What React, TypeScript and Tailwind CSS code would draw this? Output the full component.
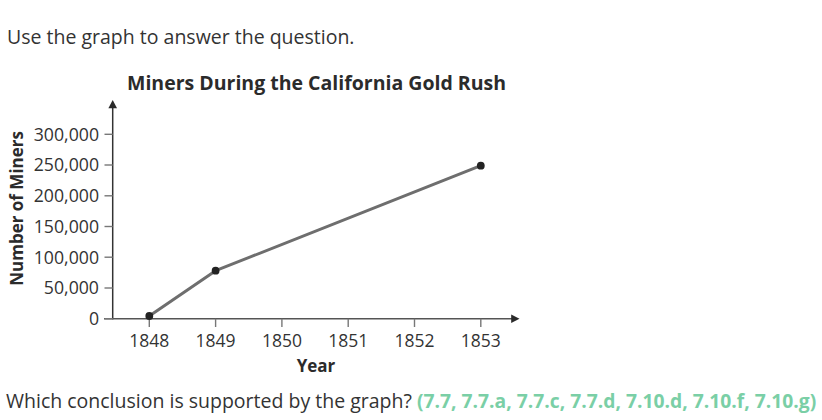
import React from "react";

const yTicks = [
  { label: "0", y: 318.7 },
  { label: "50,000", y: 288 },
  { label: "100,000", y: 257.2 },
  { label: "150,000", y: 226.5 },
  { label: "200,000", y: 195.8 },
  { label: "250,000", y: 165 },
  { label: "300,000", y: 134.3 },
];

const xTicks = [
  { label: "1848", x: 149.3 },
  { label: "1849", x: 215.6 },
  { label: "1850", x: 281.9 },
  { label: "1851", x: 348.2 },
  { label: "1852", x: 414.5 },
  { label: "1853", x: 480.8 },
];

const points = [
  { x: 149.3, y: 316 },
  { x: 215.6, y: 270.7 },
  { x: 480.8, y: 165.7 },
];

function Chart() {
  return (
    <svg
      width={540}
      height={291}
      viewBox="0 96 540 291"
      className="block"
      style={{ fontFamily: "'Open Sans', 'Noto Sans', sans-serif" }}
    >
      {/* y axis */}
      <line x1={112.7} y1={106} x2={112.7} y2={319.4} stroke="#333" strokeWidth={1.5} />
      <polygon points="112.7,100 108.4,108.2 117,108.2" fill="#2a2a2a" />
      {/* x axis */}
      <line x1={104} y1={318.7} x2={512} y2={318.7} stroke="#555" strokeWidth={1.5} />
      <polygon points="519.5,318.7 511.2,314.4 511.2,323" fill="#2a2a2a" />

      {yTicks.map((t) => (
        <g key={t.label}>
          <line x1={104.5} y1={t.y} x2={112.7} y2={t.y} stroke="#777" strokeWidth={1.4} />
          <text x={99} y={t.y + 6.4} textAnchor="end" fontSize={17.7} fill="#333">
            {t.label}
          </text>
        </g>
      ))}

      {xTicks.map((t) => (
        <g key={t.label}>
          <line x1={t.x} y1={318.7} x2={t.x} y2={327} stroke="#777" strokeWidth={1.4} />
          <text x={t.x} y={346.6} textAnchor="middle" fontSize={17.5} fill="#333">
            {t.label}
          </text>
        </g>
      ))}

      <text x={316} y={371.7} textAnchor="middle" fontSize={17} fontWeight={700} fill="#2b2b2b">
        Year
      </text>
      <text
        x={23}
        y={208.4}
        textAnchor="middle"
        fontSize={17}
        fontWeight={700}
        fill="#2b2b2b"
        transform="rotate(-90 23 208.4)"
      >
        Number of Miners
      </text>

      <polyline
        points={points.map((p) => `${p.x},${p.y}`).join(" ")}
        fill="none"
        stroke="#6e6e6e"
        strokeWidth={3}
        strokeLinejoin="round"
      />
      {points.map((p, i) => (
        <circle key={i} cx={p.x} cy={p.y} r={3.9} fill="#222" />
      ))}
    </svg>
  );
}

export default function App() {
  return (
    <div className="w-[822px] h-[420px] bg-white overflow-hidden font-['Open_Sans','Noto_Sans',sans-serif] text-[#333]">
      <p className="pt-[23px] pl-[7px] text-[19.5px] leading-[28px]">Use the graph to answer the question.</p>
      <h2 className="mt-[19px] pl-[127px] text-[19.5px] leading-[26px] font-bold text-[#2b2b2b]">
        Miners During the California Gold Rush
      </h2>
      <Chart />
      <p className="pl-[6px] text-[19.5px] leading-[28px] whitespace-nowrap">
        Which conclusion is supported by the graph?{" "}
        <span className="font-bold text-[#7acfa6] text-[19.3px]">(7.7, 7.7.a, 7.7.c, 7.7.d, 7.10.d, 7.10.f, 7.10.g)</span>
      </p>
    </div>
  );
}
